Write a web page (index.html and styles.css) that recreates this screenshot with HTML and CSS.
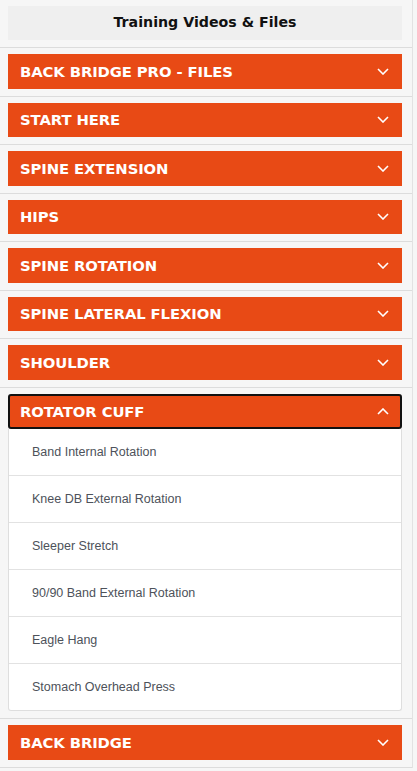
FILE: index.html
```html
<!DOCTYPE html>
<html>
<head>
<meta charset="utf-8">
<link rel="stylesheet" href="styles.css">
</head>
<body>
<div class="panel">
  <div class="title-wrap"><div class="title">Training Videos &amp; Files</div></div>
  <div class="section"><div class="bar"><span>BACK BRIDGE PRO - FILES</span><svg class="chev" viewBox="0 0 12 7"><path d="M1 1l5 5 5-5"/></svg></div></div>
  <div class="section"><div class="bar"><span>START HERE</span><svg class="chev" viewBox="0 0 12 7"><path d="M1 1l5 5 5-5"/></svg></div></div>
  <div class="section"><div class="bar"><span>SPINE EXTENSION</span><svg class="chev" viewBox="0 0 12 7"><path d="M1 1l5 5 5-5"/></svg></div></div>
  <div class="section"><div class="bar"><span>HIPS</span><svg class="chev" viewBox="0 0 12 7"><path d="M1 1l5 5 5-5"/></svg></div></div>
  <div class="section"><div class="bar"><span>SPINE ROTATION</span><svg class="chev" viewBox="0 0 12 7"><path d="M1 1l5 5 5-5"/></svg></div></div>
  <div class="section"><div class="bar"><span>SPINE LATERAL FLEXION</span><svg class="chev" viewBox="0 0 12 7"><path d="M1 1l5 5 5-5"/></svg></div></div>
  <div class="section"><div class="bar"><span>SHOULDER</span><svg class="chev" viewBox="0 0 12 7"><path d="M1 1l5 5 5-5"/></svg></div></div>
  <div class="section">
    <div class="bar open"><span>ROTATOR CUFF</span><svg class="chev" viewBox="0 0 12 7"><path d="M1 6l5-5 5 5"/></svg></div>
    <ul class="items">
      <li>Band Internal Rotation</li>
      <li>Knee DB External Rotation</li>
      <li>Sleeper Stretch</li>
      <li>90/90 Band External Rotation</li>
      <li>Eagle Hang</li>
      <li>Stomach Overhead Press</li>
    </ul>
  </div>
  <div class="section"><div class="bar"><span>BACK BRIDGE</span><svg class="chev" viewBox="0 0 12 7"><path d="M1 1l5 5 5-5"/></svg></div></div>
</div>
</body>
</html>
```
FILE: styles.css
```css
html, body {
  margin: 0;
  padding: 0;
  background: #f6f6f6;
}
.panel {
  width: 412px;
  border-right: 1px solid #e2e2e2;
  font-family: "Liberation Sans", Arial, sans-serif;
}
.title-wrap {
  padding: 6px 10px 7px 8px;
  border-bottom: 1px solid #dcdcdc;
}
.title {
  background: #efefef;
  height: 34px;
  line-height: 32px;
  text-align: center;
  font-family: "DejaVu Sans", sans-serif;
  font-weight: bold;
  font-size: 14.2px;
  color: #111;
}
.section {
  padding: 6px 10px 7px 8px;
  border-bottom: 1px solid #dcdcdc;
}
.bar {
  background: #e84a15;
  height: 34.5px;
  box-sizing: border-box;
  padding: 0 13px 0 12px;
  display: flex;
  align-items: center;
  justify-content: space-between;
  color: #fff;
  font-family: "DejaVu Sans", sans-serif;
  font-weight: bold;
  font-size: 14.8px;
  letter-spacing: -0.1px;
}
.bar.open {
  height: 35.5px;
  border: 2px solid #111;
  border-radius: 3px;
  padding: 0 11px 0 10px;
}
.chev {
  width: 12px;
  height: 7px;
  fill: none;
  stroke: #fff;
  stroke-width: 1.6;
}
.items {
  list-style: none;
  margin: 0;
  padding: 0;
  background: #fff;
  border: 1px solid #dedede;
  border-top: none;
  border-radius: 0 0 3px 3px;
}
.items li {
  height: 46px;
  line-height: 46px;
  padding-left: 23px;
  font-size: 12.5px;
  color: #4d525a;
  border-bottom: 1px solid #e2e2e2;
}
.items li:last-child {
  border-bottom: none;
}
```
